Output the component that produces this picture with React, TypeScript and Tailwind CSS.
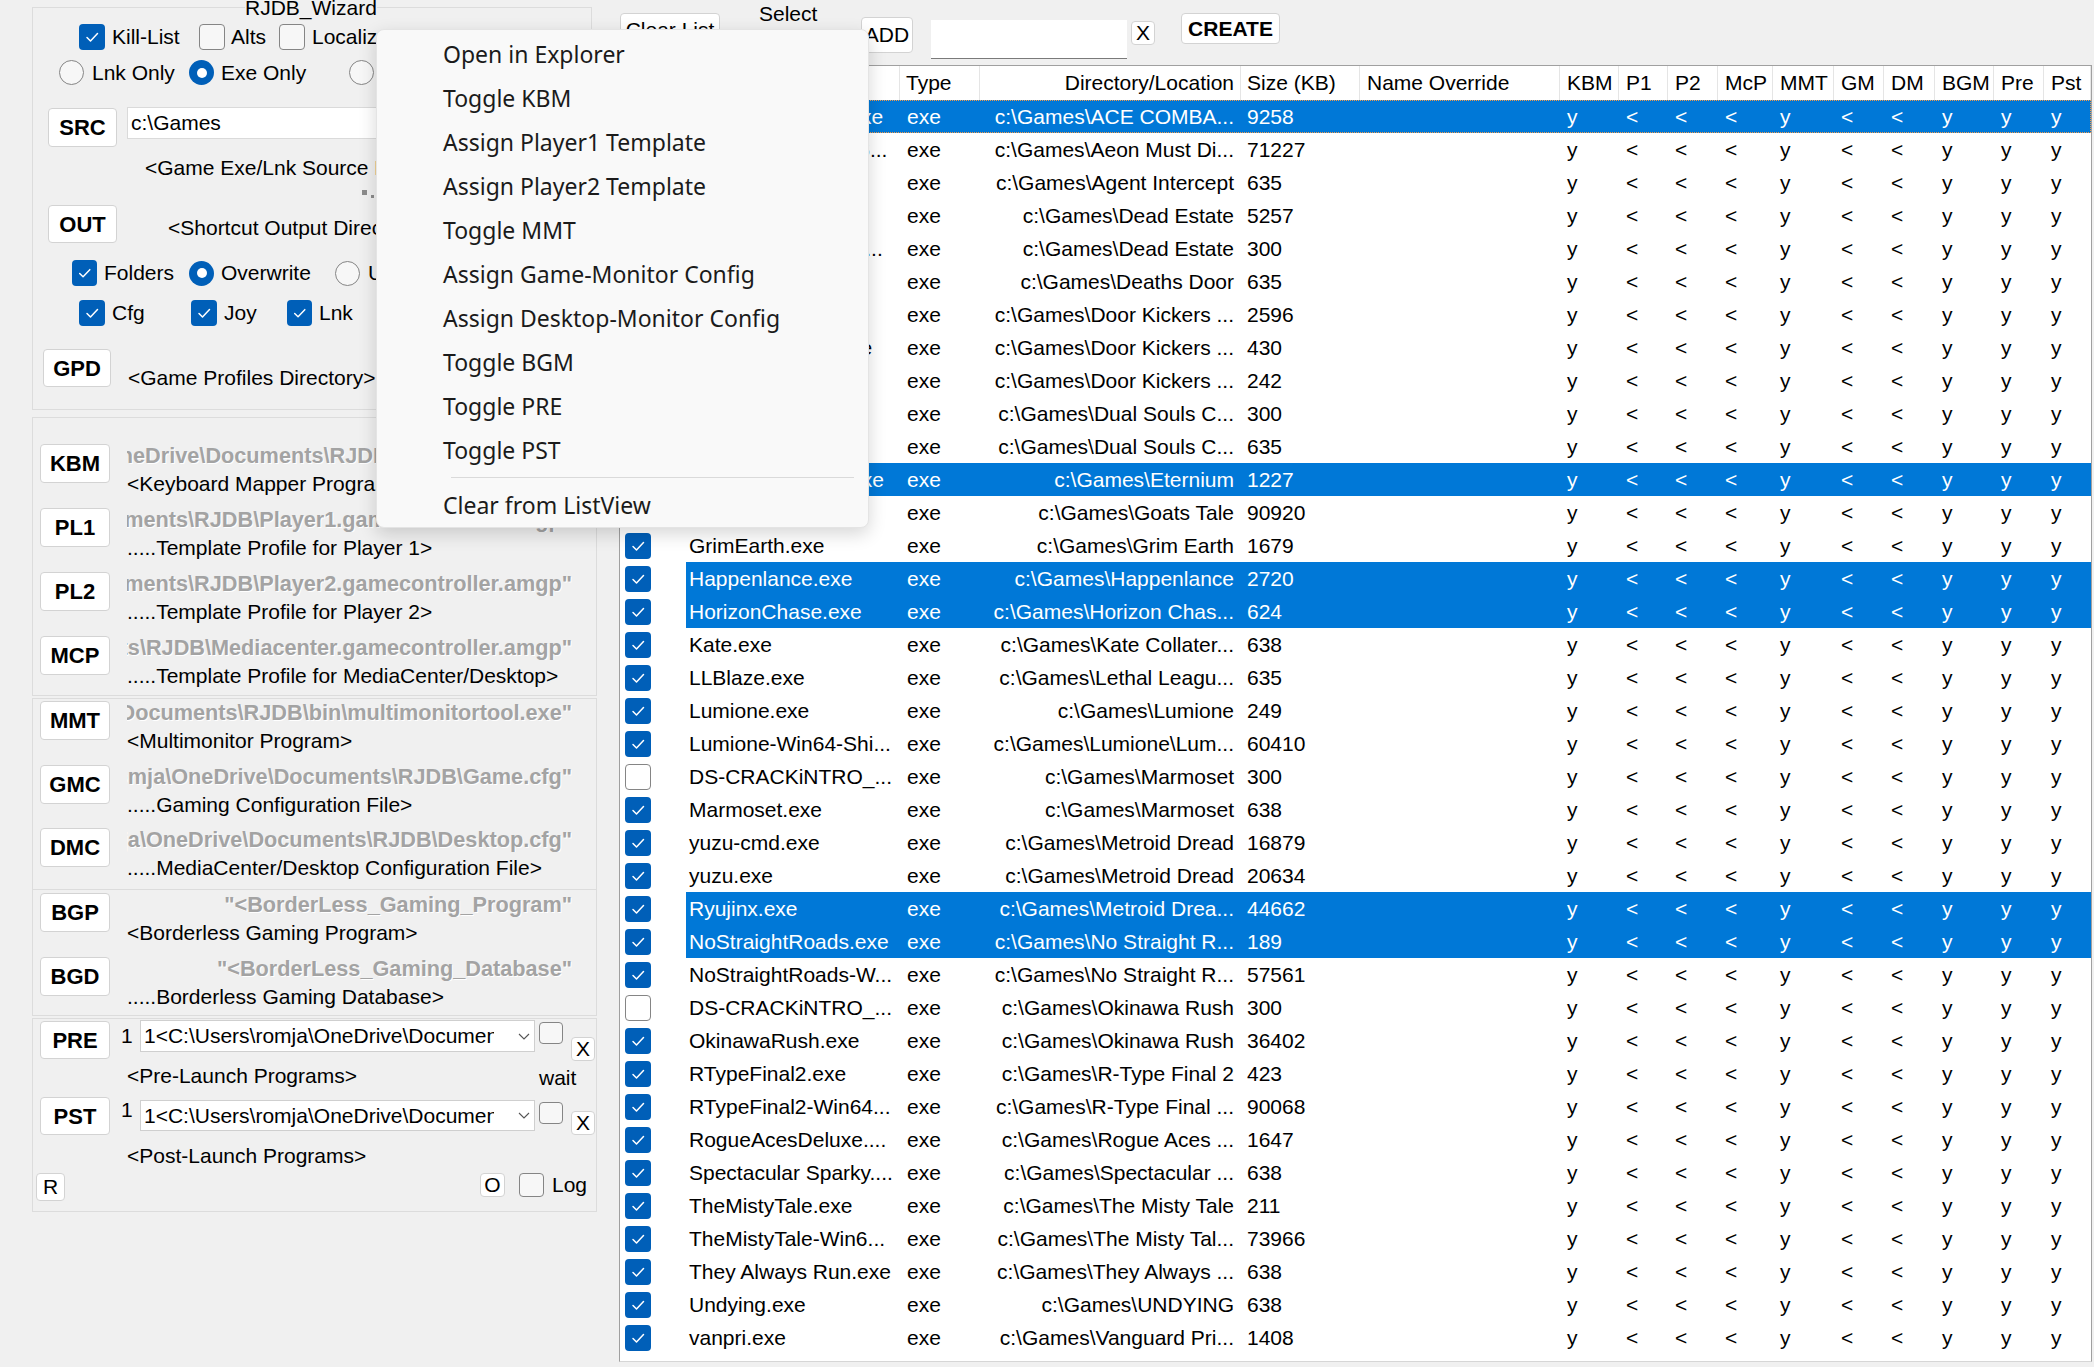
import React from 'react';

// paths are written with "/" and shown with backslashes
const bs = (s: string) => s.replace(/\//g, '\\');

type RowData = [string, string, string, string?];

const rows: RowData[] = [
  ['ACE COMBAT 7.exe', 'ACE COMBA...', '9258', 'sf'],
  ['AeonMustDie-Win6...', 'Aeon Must Di...', '71227'],
  ['AgentIntercept.exe', 'Agent Intercept', '635'],
  ['DeadEstate.exe', 'Dead Estate', '5257'],
  ['DeadEstate-Win64...', 'Dead Estate', '300'],
  ['DeathsDoor.exe', 'Deaths Door', '635'],
  ['DoorKickers.exe', 'Door Kickers ...', '2596'],
  ['Door Kickers 2 .exe', 'Door Kickers ...', '430'],
  ['DoorKickers2.exe', 'Door Kickers ...', '242'],
  ['DualSouls-Win64...', 'Dual Souls C...', '300'],
  ['DualSouls.exe', 'Dual Souls C...', '635'],
  ['Eternium_Win64.exe', 'Eternium', '1227', 's'],
  ['GoatsTale.exe', 'Goats Tale', '90920'],
  ['GrimEarth.exe', 'Grim Earth', '1679'],
  ['Happenlance.exe', 'Happenlance', '2720', 's'],
  ['HorizonChase.exe', 'Horizon Chas...', '624', 's'],
  ['Kate.exe', 'Kate Collater...', '638'],
  ['LLBlaze.exe', 'Lethal Leagu...', '635'],
  ['Lumione.exe', 'Lumione', '249'],
  ['Lumione-Win64-Shi...', 'Lumione/Lum...', '60410'],
  ['DS-CRACKiNTRO_...', 'Marmoset', '300', 'u'],
  ['Marmoset.exe', 'Marmoset', '638'],
  ['yuzu-cmd.exe', 'Metroid Dread', '16879'],
  ['yuzu.exe', 'Metroid Dread', '20634'],
  ['Ryujinx.exe', 'Metroid Drea...', '44662', 's'],
  ['NoStraightRoads.exe', 'No Straight R...', '189', 's'],
  ['NoStraightRoads-W...', 'No Straight R...', '57561'],
  ['DS-CRACKiNTRO_...', 'Okinawa Rush', '300', 'u'],
  ['OkinawaRush.exe', 'Okinawa Rush', '36402'],
  ['RTypeFinal2.exe', 'R-Type Final 2', '423'],
  ['RTypeFinal2-Win64...', 'R-Type Final ...', '90068'],
  ['RogueAcesDeluxe....', 'Rogue Aces ...', '1647'],
  ['Spectacular Sparky....', 'Spectacular ...', '638'],
  ['TheMistyTale.exe', 'The Misty Tale', '211'],
  ['TheMistyTale-Win6...', 'The Misty Tal...', '73966'],
  ['They Always Run.exe', 'They Always ...', '638'],
  ['Undying.exe', 'UNDYING', '638'],
  ['vanpri.exe', 'Vanguard Pri...', '1408'],
];

const flagCols = [
  { h: 'KBM', v: 'y', w: 'w-[59px]' },
  { h: 'P1', v: '<', w: 'w-[49px]' },
  { h: 'P2', v: '<', w: 'w-[50px]' },
  { h: 'McP', v: '<', w: 'w-[55px]' },
  { h: 'MMT', v: 'y', w: 'w-[61px]' },
  { h: 'GM', v: '<', w: 'w-[50px]' },
  { h: 'DM', v: '<', w: 'w-[51px]' },
  { h: 'BGM', v: 'y', w: 'w-[59px]' },
  { h: 'Pre', v: 'y', w: 'w-[50px]' },
  { h: 'Pst', v: 'y', w: 'w-[47px]' },
];

const menuItems = [
  'Open in Explorer',
  'Toggle KBM',
  'Assign Player1 Template',
  'Assign Player2 Template',
  'Toggle MMT',
  'Assign Game-Monitor Config',
  'Assign Desktop-Monitor Config',
  'Toggle BGM',
  'Toggle PRE',
  'Toggle PST',
];

function Check({ on, white, className = '' }: { on?: boolean; white?: boolean; className?: string }) {
  if (on) {
    return (
      <div className={`flex shrink-0 items-center justify-center rounded-[4px] bg-[#005fb8] ${className}`}>
        <svg viewBox="0 0 26 26" className="h-full w-full" fill="none" stroke="#ffffff" strokeWidth="1.5" strokeLinecap="round" strokeLinejoin="round">
          <path d="M8 13.5 L11.5 17 L18.5 9.5" />
        </svg>
      </div>
    );
  }
  return <div className={`shrink-0 rounded-[4px] border border-[#858585] ${white ? 'bg-white' : 'bg-[#f7f7f7]'} ${className}`} />;
}

function Radio({ on }: { on?: boolean }) {
  return on ? (
    <div className="flex h-[25px] w-[25px] shrink-0 items-center justify-center rounded-full bg-[#005fb8]">
      <div className="h-[10px] w-[10px] rounded-full bg-white" />
    </div>
  ) : (
    <div className="h-[25px] w-[25px] shrink-0 rounded-full border border-[#858585] bg-[#f7f7f7]" />
  );
}

function Btn({ label, bold, className = '' }: { label: string; bold?: boolean; className?: string }) {
  return (
    <div className={`flex shrink-0 items-center justify-center rounded-[4px] border border-[#d3d3d3] bg-white ${bold ? 'text-[22px] font-bold' : ''} ${className}`}>
      {label}
    </div>
  );
}

function ProfileRow({ btn, path, label, h }: { btn: string; path: string; label: string; h: string }) {
  return (
    <div className={`flex items-start ${h}`}>
      <Btn label={btn} bold className="ml-[7px] h-[39px] w-[70px]" />
      <div className="ml-[17px] w-[445px]">
        <div className="flex h-[24px] justify-end overflow-hidden whitespace-nowrap text-[21.7px] font-bold leading-[24px] text-[#a3a3a3] [text-shadow:1px_1px_0_#ffffff]">
          <span className="shrink-0">{path}</span>
        </div>
        <div className="mt-[4px] h-[24px] whitespace-nowrap leading-[24px]">{label}</div>
      </div>
    </div>
  );
}

function Combo() {
  return (
    <div className="flex h-full w-[395px] items-center border border-[#cfcfcf] bg-white">
      <div className="ml-[3px] w-[350px] overflow-hidden whitespace-nowrap leading-[24px]">
        {bs('1<C:/Users/romja/OneDrive/Documents/RJDB/bin/pre.exe')}
      </div>
      <svg viewBox="0 0 12 7" className="ml-[24px] h-[7px] w-[12px]" fill="none" stroke="#555555" strokeWidth="1.1">
        <path d="M1 1 L6 6 L11 1" />
      </svg>
    </div>
  );
}

function LeftPanel() {
  return (
    <div className="w-[619px] shrink-0 pl-[32px]">
      {/* RJDB_Wizard group */}
      <div className="relative mt-[7px] h-[403px] w-[560px] border border-[#dcdcdc]">
        <div className="absolute -top-[12px] left-[212px] bg-[#f0f0f0] leading-[24px]">RJDB_Wizard</div>

        <div className="mt-[16px] flex h-[26px] items-center">
          <div className="ml-[46px] flex w-[120px] items-center">
            <Check on className="h-[26px] w-[26px]" />
            <span className="ml-[7px]">Kill-List</span>
          </div>
          <div className="flex w-[80px] items-center">
            <Check className="h-[26px] w-[26px]" />
            <span className="ml-[6px]">Alts</span>
          </div>
          <div className="flex items-center">
            <Check className="h-[26px] w-[26px]" />
            <span className="ml-[7px]">Localize</span>
          </div>
        </div>

        <div className="mt-[10px] flex h-[25px] items-center">
          <div className="ml-[26px] flex w-[130px] items-center">
            <Radio />
            <span className="ml-[8px]">Lnk Only</span>
          </div>
          <div className="flex w-[160px] items-center">
            <Radio on />
            <span className="ml-[7px]">Exe Only</span>
          </div>
          <div className="flex items-center">
            <Radio />
            <span className="ml-[7px]">Both</span>
          </div>
        </div>

        <div className="mt-[22px] flex h-[41px] items-start">
          <Btn label="SRC" bold className="ml-[15px] mt-[1px] h-[39px] w-[69px]" />
          <div className="ml-[10px] flex h-[32px] w-[460px] items-center border border-[#dadada] bg-white pl-[3px]">{bs('c:/Games')}</div>
        </div>

        <div className="mt-[8px] h-[24px] pl-[112px] leading-[24px] whitespace-nowrap">&lt;Game Exe/Lnk Source Directory&gt;</div>

        <div className="mt-[10px] flex h-[10px] items-start pl-[329px]">
          <div className="h-[5px] w-[5px] bg-[#8c8c8c]" />
          <div className="ml-[4px] mt-[5px] h-[3px] w-[3px] bg-[#8c8c8c]" />
        </div>

        <div className="mt-[5px] flex h-[38px] items-start">
          <Btn label="OUT" bold className="ml-[15px] h-[38px] w-[69px]" />
          <div className="ml-[51px] mt-[11px] leading-[24px] whitespace-nowrap">&lt;Shortcut Output Directory&gt;</div>
        </div>

        <div className="mt-[17px] flex h-[26px] items-center">
          <div className="ml-[39px] flex w-[117px] items-center">
            <Check on className="h-[26px] w-[25px]" />
            <span className="ml-[7px]">Folders</span>
          </div>
          <div className="flex w-[146px] items-center">
            <Radio on />
            <span className="ml-[7px]">Overwrite</span>
          </div>
          <div className="flex items-center">
            <Radio />
            <span className="ml-[8px]">Update</span>
          </div>
        </div>

        <div className="mt-[14px] flex h-[26px] items-center">
          <div className="ml-[46px] flex w-[112px] items-center">
            <Check on className="h-[26px] w-[26px]" />
            <span className="ml-[7px]">Cfg</span>
          </div>
          <div className="flex w-[96px] items-center">
            <Check on className="h-[26px] w-[26px]" />
            <span className="ml-[7px]">Joy</span>
          </div>
          <div className="flex items-center">
            <Check on className="h-[26px] w-[25px]" />
            <span className="ml-[7px]">Lnk</span>
          </div>
        </div>

        <div className="mt-[23px] flex h-[38px] items-start">
          <Btn label="GPD" bold className="ml-[10px] h-[38px] w-[68px]" />
          <div className="ml-[17px] mt-[17px] leading-[24px] whitespace-nowrap">&lt;Game Profiles Directory&gt;</div>
        </div>
      </div>

      {/* templates */}
      <div className="mt-[7px] h-[279px] w-[565px] border border-[#dcdcdc]">
        <div className="h-[26px]" />
        <ProfileRow h="h-[64px]" btn="KBM" path={bs('C:/Users/romja/OneDrive/Documents/RJDB/bin/joytokey.exe"')} label="<Keyboard Mapper Program>" />
        <ProfileRow h="h-[64px]" btn="PL1" path={bs('C:/Users/romja/OneDrive/Documents/RJDB/Player1.gamecontroller.amgp"')} label=".....Template Profile for Player 1>" />
        <ProfileRow h="h-[64px]" btn="PL2" path={bs('C:/Users/romja/OneDrive/Documents/RJDB/Player2.gamecontroller.amgp"')} label=".....Template Profile for Player 2>" />
        <ProfileRow h="h-[64px]" btn="MCP" path={bs('C:/Users/romja/OneDrive/Documents/RJDB/Mediacenter.gamecontroller.amgp"')} label=".....Template Profile for MediaCenter/Desktop>" />
      </div>

      {/* monitors + borderless */}
      <div className="mt-[2px] h-[318px] w-[565px] border border-[#dcdcdc]">
        <div className="h-[2px]" />
        <ProfileRow h="h-[64px]" btn="MMT" path={bs('C:/Users/romja/OneDrive/Documents/RJDB/bin/multimonitortool.exe"')} label="<Multimonitor Program>" />
        <ProfileRow h="h-[63px]" btn="GMC" path={bs('C:/Users/romja/OneDrive/Documents/RJDB/Game.cfg"')} label=".....Gaming Configuration File>" />
        <ProfileRow h="h-[61px]" btn="DMC" path={bs('C:/Users/romja/OneDrive/Documents/RJDB/Desktop.cfg"')} label=".....MediaCenter/Desktop Configuration File>" />
        <div className="h-px bg-[#dcdcdc]" />
        <div className="h-[3px]" />
        <ProfileRow h="h-[64px]" btn="BGP" path={'"<BorderLess_Gaming_Program"'} label="<Borderless Gaming Program>" />
        <ProfileRow h="h-[57px]" btn="BGD" path={'"<BorderLess_Gaming_Database"'} label=".....Borderless Gaming Database>" />
      </div>

      {/* pre / post */}
      <div className="mt-[2px] h-[194px] w-[565px] border border-[#dcdcdc]">
        <div className="mt-[1px] flex h-[41px] items-start">
          <Btn label="PRE" bold className="ml-[7px] mt-[1px] h-[38px] w-[70px]" />
          <div className="ml-[11px] mt-[4px] w-[19px] leading-[24px]">1</div>
          <div className="h-[32px]"><Combo /></div>
          <Check className="ml-[4px] mt-[2px] h-[22px] w-[24px]" />
          <Btn label="X" className="ml-[8px] mt-[17px] h-[24px] w-[24px]" />
        </div>
        <div className="mt-[3px] flex h-[24px] items-start leading-[24px]">
          <div className="ml-[94px] w-[412px] whitespace-nowrap">&lt;Pre-Launch Programs&gt;</div>
          <div className="mt-[2px]">wait</div>
        </div>
        <div className="mt-[9px] flex h-[38px] items-start">
          <Btn label="PST" bold className="ml-[7px] h-[38px] w-[70px]" />
          <div className="ml-[11px] mt-[1px] w-[19px] leading-[24px]">1</div>
          <div className="mt-[3px] h-[31px]"><Combo /></div>
          <Check className="ml-[4px] mt-[5px] h-[22px] w-[24px]" />
          <Btn label="X" className="ml-[8px] mt-[14px] h-[24px] w-[24px]" />
        </div>
        <div className="mt-[9px] h-[24px] pl-[94px] leading-[24px] whitespace-nowrap">&lt;Post-Launch Programs&gt;</div>
        <div className="mt-[5px] flex h-[28px] items-start">
          <Btn label="R" className="ml-[3px] h-[28px] w-[29px]" />
          <Btn label="O" className="ml-[415px] h-[24px] w-[25px]" />
          <Check className="ml-[14px] h-[24px] w-[25px]" />
          <div className="ml-[8px] leading-[24px]">Log</div>
        </div>
      </div>
    </div>
  );
}

function ListView() {
  return (
    <div className="h-[1297px] w-[1473px] overflow-hidden border border-[#a0a0a0] border-b-[#d6d6d6] bg-white">
      <div className="flex h-[34px] leading-[34px] whitespace-nowrap">
        <div className="w-[280px] border-r border-[#e5e5e5] pl-[7px]">Name</div>
        <div className="w-[80px] border-r border-[#e5e5e5] pl-[6px]">Type</div>
        <div className="w-[261px] border-r border-[#e5e5e5] pr-[6px] text-right">Directory/Location</div>
        <div className="w-[119px] border-r border-[#e5e5e5] pl-[6px]">Size (KB)</div>
        <div className="w-[200px] border-r border-[#e5e5e5] pl-[7px]">Name Override</div>
        {flagCols.map((c) => (
          <div key={c.h} className={`${c.w} border-r border-[#e5e5e5] pl-[7px]`}>{c.h}</div>
        ))}
      </div>

      {rows.map(([n, d, s, f = ''], i) => {
        const sel = f.includes('s');
        return (
          <div key={i} className="flex h-[33px] leading-[33px] whitespace-nowrap">
            <div className="flex w-[66px] shrink-0 items-center">
              <Check on={!f.includes('u')} white className="ml-[5px] h-[26px] w-[26px]" />
            </div>
            <div
              className={`flex flex-1 ${sel ? 'bg-[#0078d7] text-white' : ''} ${
                f.includes('f') ? 'outline-1 -outline-offset-1 outline-dotted outline-[#f29a4a]' : ''
              }`}
            >
              <div className="w-[214px] overflow-hidden pl-[3px]">{n}</div>
              <div className="w-[80px] pl-[7px]">exe</div>
              <div className="w-[261px] overflow-hidden pr-[7px] text-right">{bs('c:/Games/' + d)}</div>
              <div className="w-[119px] pl-[6px]">{s}</div>
              <div className="w-[200px]" />
              {flagCols.map((c) => (
                <div key={c.h} className={`${c.w} pl-[7px]`}>{c.v}</div>
              ))}
            </div>
          </div>
        );
      })}
    </div>
  );
}

function RightPanel() {
  return (
    <div className="flex flex-col">
      <div className="flex h-[65px] items-start whitespace-nowrap">
        <Btn label="Clear List" className="ml-[1px] mt-[13px] h-[33px] w-[100px]" />
        <div className="ml-[39px] mt-[2px] w-[60px] leading-[24px]">Select</div>
        <Btn label="ADD" className="ml-[42px] mt-[17px] h-[36px] w-[52px]" />
        <div className="ml-[18px] mt-[20px] h-[39px] w-[196px] border-b border-[#7a7a7a] bg-white" />
        <Btn label="X" className="ml-[4px] mt-[21px] h-[24px] w-[24px]" />
        <Btn label="CREATE" className="ml-[26px] mt-[13px] h-[31px] w-[99px] font-bold" />
      </div>
      <ListView />
    </div>
  );
}

function ContextMenu() {
  return (
    <div className="absolute left-[376px] top-[29px] w-[493px] rounded-[8px] border border-[#e4e4e4] bg-[#f9f9f9] pt-[2px] font-['Noto_Sans',sans-serif] text-[23px] text-[#1b1b1b] shadow-[0_6px_18px_rgba(0,0,0,0.16)]">
      {menuItems.map((t) => (
        <div key={t} className="h-[44px] pl-[66px] leading-[44px] whitespace-nowrap">{t}</div>
      ))}
      <div className="flex h-[11px] items-center pl-[74px] pr-[14px]">
        <div className="h-px w-full bg-[#dadada]" />
      </div>
      <div className="h-[44px] pl-[66px] leading-[44px] whitespace-nowrap">Clear from ListView</div>
    </div>
  );
}

export default function App() {
  return (
    <div className="relative flex h-[1367px] w-[2094px] overflow-hidden bg-[#f0f0f0] font-['Liberation_Sans',Arial,sans-serif] text-[21px] text-black">
      <LeftPanel />
      <RightPanel />
      <ContextMenu />
    </div>
  );
}
